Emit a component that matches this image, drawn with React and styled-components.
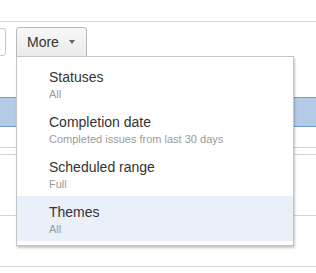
import React from "react";
import styled, { createGlobalStyle } from "styled-components";

const GlobalStyle = createGlobalStyle`
  html, body {
    margin: 0;
    padding: 0;
    background: #fff;
  }
  body {
    font-family: "Liberation Sans", Arial, sans-serif;
    color: #333;
  }
`;

const Page = styled.div`
  position: relative;
  width: 316px;
  height: 273px;
  overflow: hidden;
  padding-top: 21px;
  box-sizing: border-box;
`;

const Toolbar = styled.div`
  display: flex;
  align-items: flex-start;
  gap: 10px;
  height: 76px;
  padding-top: 5px;
  box-sizing: border-box;
  border-top: 1px solid #d6d6d6;
`;

const CutBox = styled.div`
  width: 30px;
  height: 28px;
  margin-left: -24px;
  margin-top: 1px;
  box-sizing: border-box;
  border: 1px solid #c8c8c8;
  border-radius: 3px;
  background: #fff;
`;

const MenuWrap = styled.div`
  position: relative;
  z-index: 2;
`;

const MoreButton = styled.button`
  display: flex;
  align-items: center;
  height: 30px;
  padding: 0 11px 0 10px;
  box-sizing: border-box;
  border: 1px solid #b9b9b9;
  border-radius: 3px 3px 0 0;
  background: linear-gradient(#f7f7f7, #ececec);
  font-family: inherit;
  font-size: 14px;
  color: #333;
  cursor: pointer;
`;

const Caret = styled.span`
  width: 0;
  height: 0;
  margin-left: 10px;
  border-left: 3.5px solid transparent;
  border-right: 3.5px solid transparent;
  border-top: 4px solid #666;
`;

const Dropdown = styled.ul`
  position: absolute;
  top: 29px;
  left: 0;
  width: 278px;
  margin: 0;
  padding: 4px 0;
  list-style: none;
  box-sizing: border-box;
  background: #fff;
  border: 1px solid #c4c4c4;
  box-shadow: 1px 2px 2px rgba(0, 0, 0, 0.22);
`;

const Item = styled.li`
  height: 45px;
  padding: 8px 0 0 32px;
  box-sizing: border-box;
  background: ${({ active }) => (active ? "#e9f0f9" : "transparent")};
  cursor: pointer;
`;

const ItemTitle = styled.div`
  font-size: 14px;
  line-height: 16px;
  color: #333;
`;

const ItemSub = styled.div`
  margin-top: 2px;
  font-size: 11px;
  line-height: 14px;
  color: #9a9a9a;
`;

const Row = styled.div`
  height: ${({ h }) => h}px;
  box-sizing: border-box;
  border-bottom: 1px solid #d3d3d3;
`;

const SelectedRow = styled.div`
  height: 30px;
  box-sizing: border-box;
  background: #b4cbe5;
  border-top: 1px solid #6f9dd1;
  border-bottom: 1px solid #6f9dd1;
`;

const filters = [
  { title: "Statuses", sub: "All" },
  { title: "Completion date", sub: "Completed issues from last 30 days" },
  { title: "Scheduled range", sub: "Full" },
  { title: "Themes", sub: "All", active: true },
];

export default function App() {
  return (
    <>
      <GlobalStyle />
      <Page>
        <Toolbar>
          <CutBox />
          <MenuWrap>
            <MoreButton>
              More
              <Caret />
            </MoreButton>
            <Dropdown>
              {filters.map((f) => (
                <Item key={f.title} active={f.active}>
                  <ItemTitle>{f.title}</ItemTitle>
                  <ItemSub>{f.sub}</ItemSub>
                </Item>
              ))}
            </Dropdown>
          </MenuWrap>
        </Toolbar>
        <SelectedRow />
        <Row h={21} />
        <Row h={7} />
        <Row h={61} />
        <Row h={51} />
      </Page>
    </>
  );
}
